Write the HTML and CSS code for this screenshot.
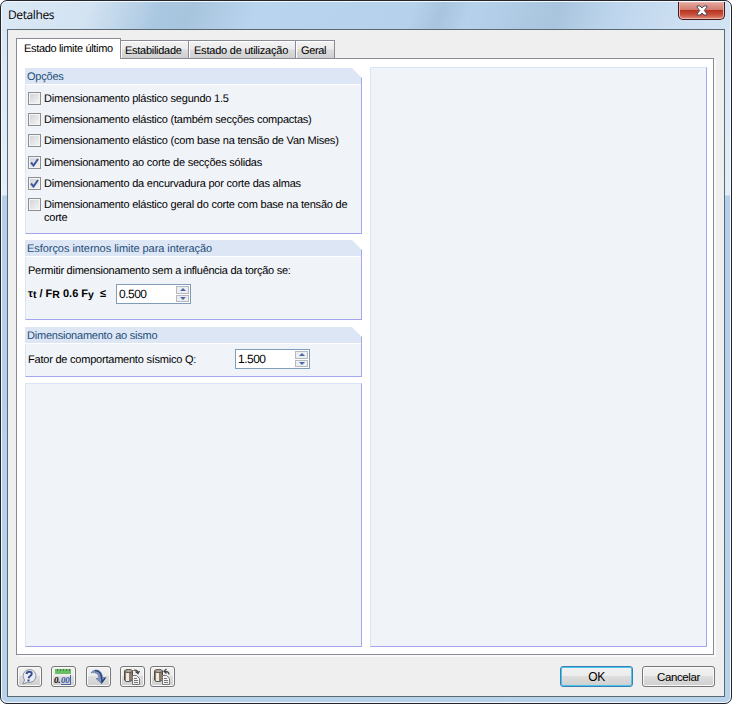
FILE: index.html
```html
<!DOCTYPE html>
<html lang="pt">
<head>
<meta charset="utf-8">
<title>Detalhes</title>
<link rel="stylesheet" href="styles.css">
</head>
<body>
<div class="window">
  <header class="titlebar"><span class="title">Detalhes</span>
    <button class="close" aria-label="Fechar"><svg width="12" height="11" viewBox="0 0 12 11"><path d="M1 1h3l2 2 2-2h3v1L8.300 5.500 11 9v1H8L6 8l-2 2H1V9l2.700-3.500L1 2z" fill="#fff" stroke="#4b4c5c"/></svg></button>
  </header>
  <main class="client">
    <nav class="tabs">
      <div class="tab active">Estado limite último</div>
      <div class="tab w1">Estabilidade</div>
      <div class="tab w2">Estado de utilização</div>
      <div class="tab w3">Geral</div>
    </nav>
    <section class="page">
      <div class="column">
        <section class="group g-options">
          <h2>Opções</h2>
          <div class="options">
            <label><i class="box"></i><span>Dimensionamento plástico segundo 1.5</span></label>
            <label><i class="box"></i><span>Dimensionamento elástico (também secções compactas)</span></label>
            <label><i class="box"></i><span>Dimensionamento elástico (com base na tensão de Van Mises)</span></label>
            <label><i class="box"><svg width="9" height="9" viewBox="0 0 9 9"><path d="M1 4.500 3.500 7.500 8 1" fill="none" stroke="#3f57a0" stroke-width="2"/></svg></i><span>Dimensionamento ao corte de secções sólidas</span></label>
            <label><i class="box"><svg width="9" height="9" viewBox="0 0 9 9"><path d="M1 4.500 3.500 7.500 8 1" fill="none" stroke="#3f57a0" stroke-width="2"/></svg></i><span>Dimensionamento da encurvadura por corte das almas</span></label>
            <label><i class="box"></i><span>Dimensionamento elástico geral do corte com base na tensão de<br>corte</span></label>
          </div>
        </section>
        <section class="group g-forces">
          <h2 class="wide">Esforços internos limite para interação</h2>
          <p class="allow">Permitir dimensionamento sem a influência da torção se:</p>
          <div class="row"><span class="formula">τ<small>t</small> / F<small>R</small> 0.6 F<small>y</small> &nbsp;≤</span>
            <div class="spin"><span>0.500</span><div class="arrows"><i><svg width="6" height="3"><path d="M0 3 3 0 6 3z"/></svg></i><i><svg width="6" height="3"><path d="M0 0H6L3 3z"/></svg></i></div></div>
          </div>
        </section>
        <section class="group g-seismic">
          <h2>Dimensionamento ao sismo</h2>
          <div class="row seismic"><span class="label">Fator de comportamento sísmico Q:</span>
            <div class="spin"><span>1.500</span><div class="arrows"><i><svg width="6" height="3"><path d="M0 3 3 0 6 3z"/></svg></i><i><svg width="6" height="3"><path d="M0 0H6L3 3z"/></svg></i></div></div>
          </div>
        </section>
        <section class="group empty"></section>
      </div>
      <section class="group empty"></section>
    </section>
    <footer class="footer">
      <button class="btn tool b1" aria-label="Ajuda"><svg width="18" height="18" viewBox="0 0 18 18"><path d="M9.500 1.500a6.500 6.500 0 1 1-2 12.700L3 16l1.500-4A6.500 6.500 0 0 1 9.500 1.500z" fill="#e9edf5" stroke="#8d9198"/><path d="M6.500 6C7 3 12 3 11.700 6 11.500 8 9 8 8.600 10.200" fill="none" stroke="#3a4d94" stroke-width="2"/><path d="M7.500 11.500h2v2h-2z" fill="#3a4d94"/></svg></button>
      <button class="btn tool b2" aria-label="Unidades"><svg width="18" height="18" viewBox="0 0 18 18"><path d="M1 1h16v5H1z" fill="#6bbd68"/><path d="M3.500 1v2M6.500 1v2M9.500 1v2M12.500 1v2M15.500 1v2" stroke="#3c843f"/><path d="M7 16.500h10M16.500 7v9" stroke="#4865a8"/><text x="0" y="15" class="num">0.</text><text x="7" y="15" class="num blue">00</text></svg></button>
      <button class="btn tool b3" aria-label="Padrão"><svg width="18" height="18" viewBox="0 0 18 18"><path d="M2 5C5 0 13 1 13.500 9.500H17l-4.500 6-5.500-5h3C10 6 6 3.500 2 5z" fill="#7f93bd" stroke="#6076a5" stroke-width=".7"/><path d="M6 2.700c4 0 6.500 3 6.700 8l.3 3.500 3-4" fill="none" stroke="#263c78" stroke-width="1.300"/></svg></button>
      <button class="btn tool b4" aria-label="Carregar"><svg width="18" height="18" viewBox="0 0 18 18"><path d="M1.500 3v9c1 2 6 2 8 0V3z" fill="#8d7d6d" stroke="#514a44"/><path d="M4.500 4v9" stroke="#efe9df" stroke-width="3"/><ellipse cx="5.500" cy="3" rx="4" ry="1.500" fill="#b8aea2" stroke="#514a44"/><path d="M9.500 7.500h4l3 3v6h-7z" fill="#f3f3f3" stroke="#777"/><path d="M11 10.500h3M11 12.500h4M11 14.500h4" stroke="#777"/><path d="M10.500 2.500c3-1 4 0 4.500 2.500M12.500 3.500l2.500 2 1.500-2.500" fill="none" stroke="#444" stroke-width="1.300"/></svg></button>
      <button class="btn tool b5" aria-label="Guardar"><svg width="18" height="18" viewBox="0 0 18 18"><path d="M1.500 3v9c1 2 6 2 8 0V3z" fill="#8d7d6d" stroke="#514a44"/><path d="M4.500 4v9" stroke="#efe9df" stroke-width="3"/><ellipse cx="5.500" cy="3" rx="4" ry="1.500" fill="#b8aea2" stroke="#514a44"/><path d="M9.500 7.500h4l3 3v6h-7z" fill="#f3f3f3" stroke="#777"/><path d="M11 10.500h3M11 12.500h4M11 14.500h4" stroke="#777"/><path d="M16 6.500c0-2.500-2-3.500-5-3M13.500 1 11 3.300l2.500 2.200" fill="none" stroke="#444" stroke-width="1.300"/></svg></button>
      <button class="btn ok">OK</button>
      <button class="btn cancel">Cancelar</button>
    </footer>
  </main>
</div>
</body>
</html>
```

FILE: styles.css
```css
* { box-sizing: border-box; }
body { margin: 0; background: #fff; font: 11px/13px "Liberation Sans", Arial, sans-serif; color: #000; letter-spacing: -.22px; text-rendering: geometricPrecision; }
h2, p { margin: 0; font: inherit; }
button { font: inherit; padding: 0; }
span, .tab, h2, p { white-space: nowrap; }
.window {
  width: 732px; height: 704px; padding: 0 6px 6px;
  border: 1px solid #23252d; border-radius: 7px;
  box-shadow: inset 0 0 0 1px #f4f9fe;
  background: linear-gradient(#d6e5f4 0, #e4eefa 194px, #b4cfeb 195px, #b8d2ec 100%);
}
.titlebar {
  display: flex; justify-content: space-between; height: 27px; margin: 1px -5px 0; padding-left: 6px;
  border-radius: 5px 5px 0 0;
  background: linear-gradient(70deg, #dce9f5 0, #d3e3f2 12%, #a9c7e1 21%, #a8c5de 25%, #b9d4ee 33%, #b5d1ec 56%, #a6c2dc 61%, #b5d1ec 65%, #a9c5dd 76%, #bcd5ed 82%, #cfe0f2 94%, #d3e4f4 100%);
  background: linear-gradient(110deg, #dce9f5 0, #d3e3f2 12%, #a9c7e1 22%, #a8c5de 26%, #b9d4ee 35%, #b5d1ec 56%, #a8c4de 60%, #b5d1ec 64%, #a9c5dd 76%, #bcd5ed 83%, #cfe0f2 94%, #d3e4f4 100%);
}
.title { font: 12px/26px "Open Sans", sans-serif; letter-spacing: -.4px; }
.close {
  width: 47px; height: 18px; margin-right: 5px; border: 1px solid #46191b; border-top: 0;
  border-radius: 0 0 5px 5px; display: flex; align-items: center; justify-content: center;
  background: linear-gradient(#e4aaa0, #d27b6d 47%, #b83420 50%, #c9503b 75%, #df8b77);
  box-shadow: inset 0 0 0 1px #e9b5ad;
}
.client { width: 718px; height: 668px; padding: 8px 10px 0 8px; border: 1px solid #596a73; background: #efefef; }
.tabs { display: flex; align-items: flex-end; height: 20px; }
.tab {
  height: 18px; padding: 4px 0 0 4px; border: 1px solid #898c95; border-bottom: 0; border-left: 0;
  background: linear-gradient(#f3f3f3, #ebebeb 48%, #dcdcdc 52%, #cfcfcf); box-shadow: inset 1px 1px #fff;
}
.active { width: 105px; height: 21px; margin-bottom: -1px; padding-left: 7px; border-left: 1px solid #898c95; background: #fff; position: relative; letter-spacing: -.33px; }
.w1 { width: 68px; letter-spacing: -.28px; } .w2 { width: 107px; padding-left: 5px; } .w3 { width: 39px; padding-left: 5px; letter-spacing: -.35px; }
.page { display: flex; gap: 8px; width: 698px; height: 597px; padding: 8px 6px 7px 8px; border: 1px solid #898c95; background: #fff; box-shadow: 2px 2px #f9f9f9; }
.column { display: flex; flex-direction: column; gap: 6px; width: 337px; padding-top: 1px; }
.group { position: relative; background: #f0f3f8; border: 1px solid #d9e4f4; border-right-color: #a6a6ef; border-bottom-color: #a6a6ef; }
.empty { flex: 1; }
.group h2 { height: 16px; margin: -1px 0 0 -1px; padding: 3px 0 0 2px; background: #dce6f5; color: #1f4e79; box-shadow: 0 1px #fff; }
.group h2.wide { letter-spacing: -.05px; }
.group h2::after { content: ""; position: absolute; top: -1px; right: -1px; width: 10px; height: 10px; background: #fff; clip-path: polygon(0 0, 100% 0, 100% 100%); }
.g-options { height: 166px; } .g-forces { height: 80px; margin-bottom: 1px; } .g-seismic { height: 50px; }
.options { padding: 8px 0 0 2px; }
.options label { display: flex; gap: 3px; height: 21.2px; }
.options span { padding-top: 1px; }
.box { display: flex; align-items: center; justify-content: center; width: 13px; height: 13px; border: 1px solid #8e8f8f; background: linear-gradient(135deg, #cfd2d6, #f6f6f6); box-shadow: inset 0 0 0 1px #f4f4f4; }
.allow { padding: 9px 0 0 2px; letter-spacing: -.26px; }
.row { display: flex; align-items: center; padding: 6px 0 0 2px; }
.formula { width: 88px; font-weight: bold; letter-spacing: 0; }
.formula small { font-size: 10.500px; position: relative; top: 1px; }
.spin { display: flex; justify-content: space-between; width: 75px; height: 20px; padding: 1px; border: 1px solid #7f9db9; background: #fff; }
.spin > span { font-size: 12px; line-height: 16px; padding-left: 1px; letter-spacing: -.5px; }
.arrows { width: 13px; display: flex; flex-direction: column; gap: 1px; }
.arrows i { flex: 1; display: flex; align-items: center; justify-content: center; border: 1px solid #b4b8c1; background: #eee; }
.arrows path { fill: #4b66ad; }
.seismic { padding-top: 6px; } .label { width: 207px; padding-top: 3px; }
.footer { display: flex; padding: 11px 0 0 1px; margin-right: -1px; }
.btn { display: flex; align-items: center; justify-content: center; height: 21px; border: 1px solid #777; border-radius: 3px; background: linear-gradient(#f2f2f2, #ebebeb 49%, #ddd 50%, #cfcfcf); box-shadow: inset 0 0 0 1px #fafafa; color: #000; }
.tool { width: 25px; padding-right: 1px; }
.b2 { margin-left: 9px; } .b3 { margin-left: 10px; } .b4 { margin-left: 9px; } .b5 { margin-left: 5px; }
.ok, .cancel { width: 73px; font-size: 12px; letter-spacing: -.4px; padding-top: 1px; }
.ok { margin-left: auto; border-color: #3c7fb1; box-shadow: inset 0 0 0 1px #48c7ee; }
.cancel { margin-left: 9px; font-size: 11.500px; }
.num { font: italic bold 9px "Liberation Serif", serif; letter-spacing: -.2px; }
.blue { fill: #3d56a0; }
```
